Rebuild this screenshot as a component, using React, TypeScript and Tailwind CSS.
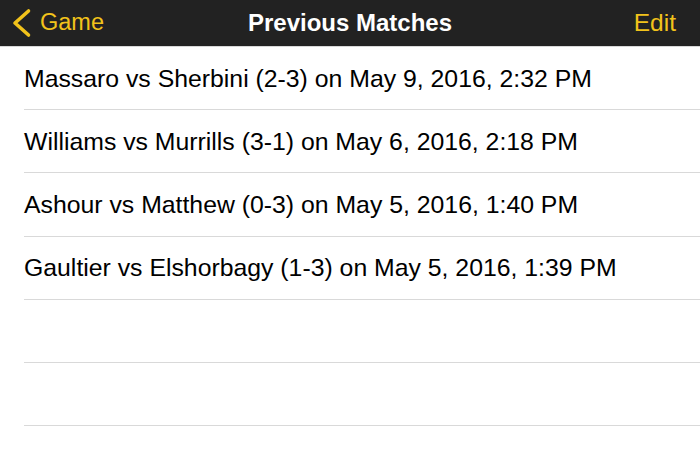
import React from 'react';

const matches = [
  'Massaro vs Sherbini (2-3) on May 9, 2016, 2:32 PM',
  'Williams vs Murrills (3-1) on May 6, 2016, 2:18 PM',
  'Ashour vs Matthew (0-3) on May 5, 2016, 1:40 PM',
  'Gaultier vs Elshorbagy (1-3) on May 5, 2016, 1:39 PM',
  '',
  '',
];

const App: React.FC = () => {
  return (
    <div className="w-[700px] h-[460px] bg-white overflow-hidden" style={{ fontFamily: '"Liberation Sans", Arial, sans-serif' }}>
      <div className="relative h-[47px] bg-[#222222] flex items-center justify-between border-b border-[#d8d8d8]">
        <button className="flex items-center h-full pl-[10px] text-[#f2c31b] text-[23.5px]">
          <svg width="22" height="30" viewBox="0 0 22 30" className="mr-[8px]">
            <path d="M18.5 3 L5 15 L18.5 27" fill="none" stroke="#f2c31b" strokeWidth="3.6" strokeLinecap="round" strokeLinejoin="round" />
          </svg>
          <span>Game</span>
        </button>
        <h1 className="absolute left-1/2 -translate-x-1/2 text-white text-[24px] font-bold">Previous Matches</h1>
        <button className="pr-[24px] text-[#f2c31b] text-[24.5px]">Edit</button>
      </div>
      <ul>
        {matches.map((m, i) => (
          <li key={i} className="pl-[24px]">
            <div className="h-[63.2px] flex items-center border-b border-[#d9d9d9] text-[24.8px] text-black">
              {m}
            </div>
          </li>
        ))}
      </ul>
    </div>
  );
};

export default App;
